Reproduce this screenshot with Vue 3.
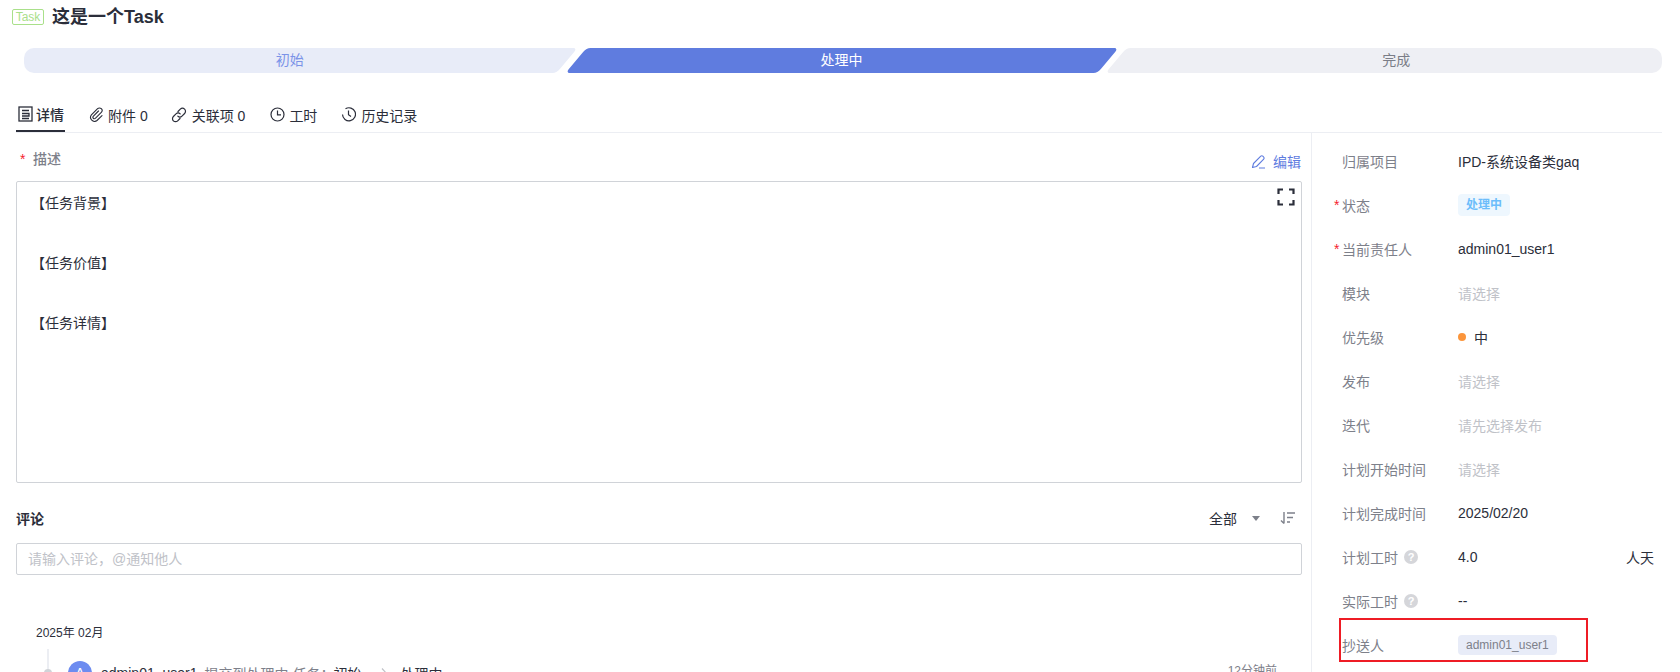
<template>
  <div class="page">
    <div class="title-row">
      <span class="type-tag">Task</span>
      <h1>这是一个Task</h1>
    </div>

    <div class="steps">
      <div v-for="step in steps" :key="step.name" class="step" :class="step.cls"><span>{{ step.name }}</span></div>
    </div>

    <div class="tabs">
      <a class="tab active">
        <svg width="15" height="16" viewBox="0 0 15 16" fill="none" stroke="currentColor" stroke-width="1.3"><rect x="1" y="1" width="13" height="14" /><path d="M4 4.5h7M4 7.5h7v2.5H4M4 12.5h7" /></svg>
        详情
      </a>
      <a class="tab">
        <svg width="15" height="15" viewBox="0 0 15 15" fill="none" stroke="currentColor" stroke-width="1.1" stroke-linecap="round"><path d="M9.5 4 4.2 9.3a1.5 1.5 0 0 0 2.1 2.1l6-6a2.6 2.6 0 0 0-3.7-3.7L2.4 7.9a4 4 0 0 0 5.6 5.6L13 8.6" /></svg>
        附件 0
      </a>
      <a class="tab link">
        <svg width="16" height="16" viewBox="0 0 16 16" fill="none" stroke="currentColor" stroke-width="1.2" stroke-linecap="round"><path d="M7 4.5 9.3 2.2a3 3 0 0 1 4.3 4.3L11 9.1a3 3 0 0 1-4.2 0M9 11.5l-2.3 2.3a3 3 0 0 1-4.3-4.3L5 6.9a3 3 0 0 1 4.2 0" /></svg>
        关联项 0
      </a>
      <a class="tab">
        <svg width="15" height="15" viewBox="0 0 15 15" fill="none" stroke="currentColor" stroke-width="1.2"><circle cx="7.5" cy="7.5" r="6.5" /><path d="M7.5 3.5v4.300h3.500" /></svg>
        工时
      </a>
      <a class="tab history">
        <svg width="15" height="15" viewBox="0 0 15 15" fill="none" stroke="currentColor" stroke-width="1.2"><path d="M4.500 1.800a6.500 6.500 0 1 1-3 5.700" /><path d="M7.500 3.500v4.300l2.500 1.700" /></svg>
        历史记录
      </a>
    </div>

    <div class="body">
      <div class="main">
        <div class="desc-head">
          <span class="desc-label"><i class="req">*</i>描述</span>
          <a class="edit">
            <svg width="15" height="15" viewBox="0 0 15 15" fill="none" stroke="currentColor" stroke-width="1.100" stroke-linejoin="round"><path d="M1.500 13.500 2.500 9.500 9.800 2.200a1.400 1.400 0 0 1 2 0l.9.900a1.400 1.400 0 0 1 0 2L5.500 12.500zM8 14h6" /></svg>
            编辑
          </a>
        </div>
        <div class="editor">
          <svg class="fullscreen" width="18" height="18" viewBox="0 0 18 18" fill="none" stroke="#2b2e3a" stroke-width="2.200"><path d="M1.500 6V1.500H6M12 1.500h4.500V6M1.500 12v4.500H6M12 16.500h4.500V12" /></svg>
          <p v-for="line in sections" :key="line">{{ line }}</p>
        </div>

        <div class="comment-head">
          <strong>评论</strong>
          <div class="comment-tools">
            <span class="filter">全部</span>
            <i class="caret"></i>
            <svg width="16" height="14" viewBox="0 0 16 14" fill="none" stroke="#7d808a" stroke-width="1.400"><path d="M4 1v11.500M1 9.500l3 3M7 2h8M7 6.500h6M7 11h3" /></svg>
          </div>
        </div>
        <div class="comment-input">请输入评论，@通知他人</div>

        <div class="month">2025年 02月</div>
        <div class="activity">
          <span class="node"></span>
          <span class="avatar">A</span>
          <span>admin01_user1</span>
          <span class="what">提交到处理中 任务：</span>
          <span class="from">初始</span>
          <svg class="arrow" width="15" height="12" viewBox="0 0 15 12" fill="none" stroke="#c0c2c8" stroke-width="1.200"><path d="M0 7h14M9 1.500 14 7" /></svg>
          <span>处理中</span>
          <span class="when">12分钟前</span>
        </div>
      </div>

      <aside class="side">
        <div v-for="row in fields" :key="row.label" class="field">
          <div class="field-label">
            <i class="req-slot">{{ row.required ? '*' : '' }}</i>{{ row.label }}
            <span v-if="row.help" class="help">?</span>
          </div>
          <div class="field-value" :class="{ empty: row.empty }">
            <span v-if="row.kind === 'status'" class="status">{{ row.value }}</span>
            <span v-else-if="row.kind === 'priority'" class="priority"><i class="dot"></i>{{ row.value }}</span>
            <span v-else-if="row.kind === 'user'" class="user-chip">{{ row.value }}</span>
            <template v-else>{{ row.value }}</template>
            <span v-if="row.unit" class="unit">{{ row.unit }}</span>
          </div>
        </div>
        <div class="highlight"></div>
      </aside>
    </div>
  </div>
</template>

<script setup>
const steps = [
  { name: '初始', cls: 'done' },
  { name: '处理中', cls: 'current' },
  { name: '完成', cls: 'todo' },
]

const sections = ['【任务背景】', '【任务价值】', '【任务详情】']

const fields = [
  { label: '归属项目', value: 'IPD-系统设备类gaq' },
  { label: '状态', value: '处理中', required: true, kind: 'status' },
  { label: '当前责任人', value: 'admin01_user1', required: true },
  { label: '模块', value: '请选择', empty: true },
  { label: '优先级', value: '中', kind: 'priority' },
  { label: '发布', value: '请选择', empty: true },
  { label: '迭代', value: '请先选择发布', empty: true },
  { label: '计划开始时间', value: '请选择', empty: true },
  { label: '计划完成时间', value: '2025/02/20' },
  { label: '计划工时', value: '4.0', help: true, unit: '人天' },
  { label: '实际工时', value: '--', help: true },
  { label: '抄送人', value: 'admin01_user1', kind: 'user' },
]
</script>

<style>
html, body {
  margin: 0;
  background: #fff;
  overflow: hidden;
}
</style>

<style scoped>
.page {
  height: 672px;
  overflow: hidden;
  font-family: "Liberation Sans", "Noto Sans CJK SC", sans-serif;
  font-size: 14px;
  color: #2b2e3a;
  background: #fff;
}

.title-row {
  display: flex;
  align-items: center;
  gap: 8px;
  height: 34px;
  padding-left: 12px;
}

.type-tag {
  box-sizing: border-box;
  width: 32px;
  height: 16px;
  border: 1px solid #a9e08a;
  border-radius: 2px;
  color: #a9e08a;
  font-size: 12px;
  line-height: 14px;
  text-align: center;
}

h1 {
  margin: 0;
  font-size: 18px;
  font-weight: 700;
  line-height: 24px;
}

.steps {
  display: flex;
  gap: 9px;
  margin: 14px 18px 0 24px;
  height: 25px;
}

.step {
  position: relative;
  box-sizing: border-box;
  flex: 1 1 0;
  height: 25px;
  line-height: 25px;
  text-align: center;
}

.step span {
  position: relative;
  z-index: 1;
}

.step::before {
  content: "";
  position: absolute;
  top: 0;
  bottom: 0;
  left: 0;
  right: 0;
  border-radius: 4px;
  transform: skewX(-40deg);
  background: var(--step-bg);
}

.step::after {
  content: "";
  position: absolute;
  top: 0;
  bottom: 0;
  width: 60px;
  background: var(--step-bg);
}

.done {
  --step-bg: #e8ecf8;
  color: #7b93e8;
  padding-right: 11px;
}

.done::before {
  left: 30px;
}

.done::after {
  left: 0;
  border-radius: 10px 0 0 10px;
}

.current {
  --step-bg: #5f7cdf;
  color: #fff;
}

.current::after {
  display: none;
}

.todo {
  --step-bg: #eeeff4;
  color: #7a7d87;
  padding-left: 14px;
}

.todo::before {
  right: 30px;
}

.todo::after {
  right: 0;
  border-radius: 0 10px 10px 0;
}

.tabs {
  display: flex;
  height: 35px;
  margin: 24px 18px 0 16px;
  border-bottom: 1px solid #eceef3;
}

.tab {
  display: flex;
  align-items: center;
  gap: 4px;
  height: 35px;
  margin-right: 23px;
  white-space: nowrap;
}

.tab.active {
  gap: 3px;
  padding: 0 1px 0 2px;
  margin-right: 24px;
  height: 33px;
  border-bottom: 2px solid #2b2e3a;
  font-weight: 500;
}

.tab.link {
  gap: 5px;
  margin-right: 25px;
}

.tab.history {
  gap: 5px;
  margin-left: 1px;
}

.body {
  display: flex;
  margin-right: 18px;
}

.main {
  width: 1286px;
  margin-left: 16px;
}

.desc-head {
  display: flex;
  justify-content: space-between;
  height: 48px;
}

.desc-label {
  margin-top: 15px;
  line-height: 22px;
  color: #7d808a;
  font-weight: 500;
}

.req {
  display: inline-block;
  width: 17px;
  padding-left: 4px;
  box-sizing: border-box;
  color: #f5222d;
  font-style: normal;
}

.edit {
  display: flex;
  align-items: center;
  gap: 7px;
  height: 22px;
  margin-top: 17px;
  margin-right: 1px;
  color: #5f7cdf;
}

.editor {
  position: relative;
  box-sizing: border-box;
  height: 302px;
  padding: 11px 14px;
  border: 1px solid #d0d3d8;
  border-radius: 2px;
}

.editor p {
  margin: 0 0 40px;
  line-height: 20px;
}

.fullscreen {
  position: absolute;
  top: 6px;
  right: 6px;
}

.comment-head {
  display: flex;
  justify-content: space-between;
  align-items: center;
  height: 22px;
  margin-top: 24px;
  margin-bottom: 14px;
}

.comment-tools {
  display: flex;
  align-items: center;
  gap: 10px;
  padding-right: 6px;
}

.filter {
  margin-right: 5px;
}

.caret {
  width: 0;
  height: 0;
  margin-right: 10px;
  border: 4px solid transparent;
  border-top: 5px solid #7d808a;
  border-bottom: 0;
}

.comment-input {
  box-sizing: border-box;
  height: 32px;
  padding-left: 11px;
  border: 1px solid #d0d3d8;
  border-radius: 2px;
  color: #c0c2c8;
  line-height: 30px;
}

.month {
  margin: 48px 0 0 20px;
  font-size: 12px;
  line-height: 20px;
}

.activity {
  position: relative;
  display: flex;
  align-items: center;
  height: 24px;
  margin-top: 18px;
  padding-left: 52px;
}

.activity::before {
  content: "";
  position: absolute;
  left: 31px;
  top: -12px;
  bottom: 0;
  width: 2px;
  background: #eceef3;
}

.node {
  position: absolute;
  left: 28px;
  top: 8px;
  width: 8px;
  height: 8px;
  border-radius: 50%;
  background: #d0d3d8;
}

.avatar {
  width: 24px;
  height: 24px;
  margin-right: 9px;
  border-radius: 50%;
  background: #6d8cf0;
  color: #fff;
  line-height: 24px;
  text-align: center;
}

.what {
  margin-left: 7px;
  color: #7d808a;
}

.from {
  margin-left: -1px;
}

.arrow {
  margin: 0 12px;
}

.when {
  margin-left: auto;
  margin-right: 25px;
  margin-top: -8px;
  font-size: 12px;
  color: #7d808a;
}

.side {
  position: relative;
  flex: 1;
  margin-left: 9px;
  padding: 6px 0 0 22px;
  height: 540px;
  border-left: 1px solid #eceef3;
}

.field {
  display: flex;
  align-items: center;
  height: 44px;
}

.field-label {
  display: flex;
  align-items: center;
  width: 124px;
  flex-shrink: 0;
  color: #7d808a;
  white-space: nowrap;
}

.req-slot {
  width: 8px;
  flex-shrink: 0;
  color: #f5222d;
  font-style: normal;
}

.help {
  width: 14px;
  height: 14px;
  margin-left: 6px;
  border-radius: 50%;
  background: #d5d6da;
  color: #fff;
  font-size: 11px;
  font-weight: 700;
  line-height: 14px;
  text-align: center;
}

.field-value {
  display: flex;
  flex: 1;
  align-items: center;
  white-space: nowrap;
}

.field-value.empty {
  color: #c0c2c8;
}

.status {
  padding: 0 8px;
  height: 22px;
  border-radius: 4px;
  background: #eef7fe;
  color: #6cbdfb;
  font-size: 12px;
  font-weight: 700;
  line-height: 22px;
}

.priority {
  display: flex;
  align-items: center;
}

.dot {
  width: 8px;
  height: 8px;
  margin-right: 8px;
  border-radius: 50%;
  background: #fb953b;
}

.user-chip {
  padding: 0 8px;
  height: 20px;
  border-radius: 4px;
  background: #e8ecf8;
  color: #7d808a;
  font-size: 12px;
  line-height: 20px;
}

.unit {
  margin-left: auto;
  margin-right: 8px;
}

.highlight {
  position: absolute;
  left: 27px;
  top: 485px;
  width: 245px;
  height: 40px;
  border: 2px solid #ee1c25;
  pointer-events: none;
}
</style>
